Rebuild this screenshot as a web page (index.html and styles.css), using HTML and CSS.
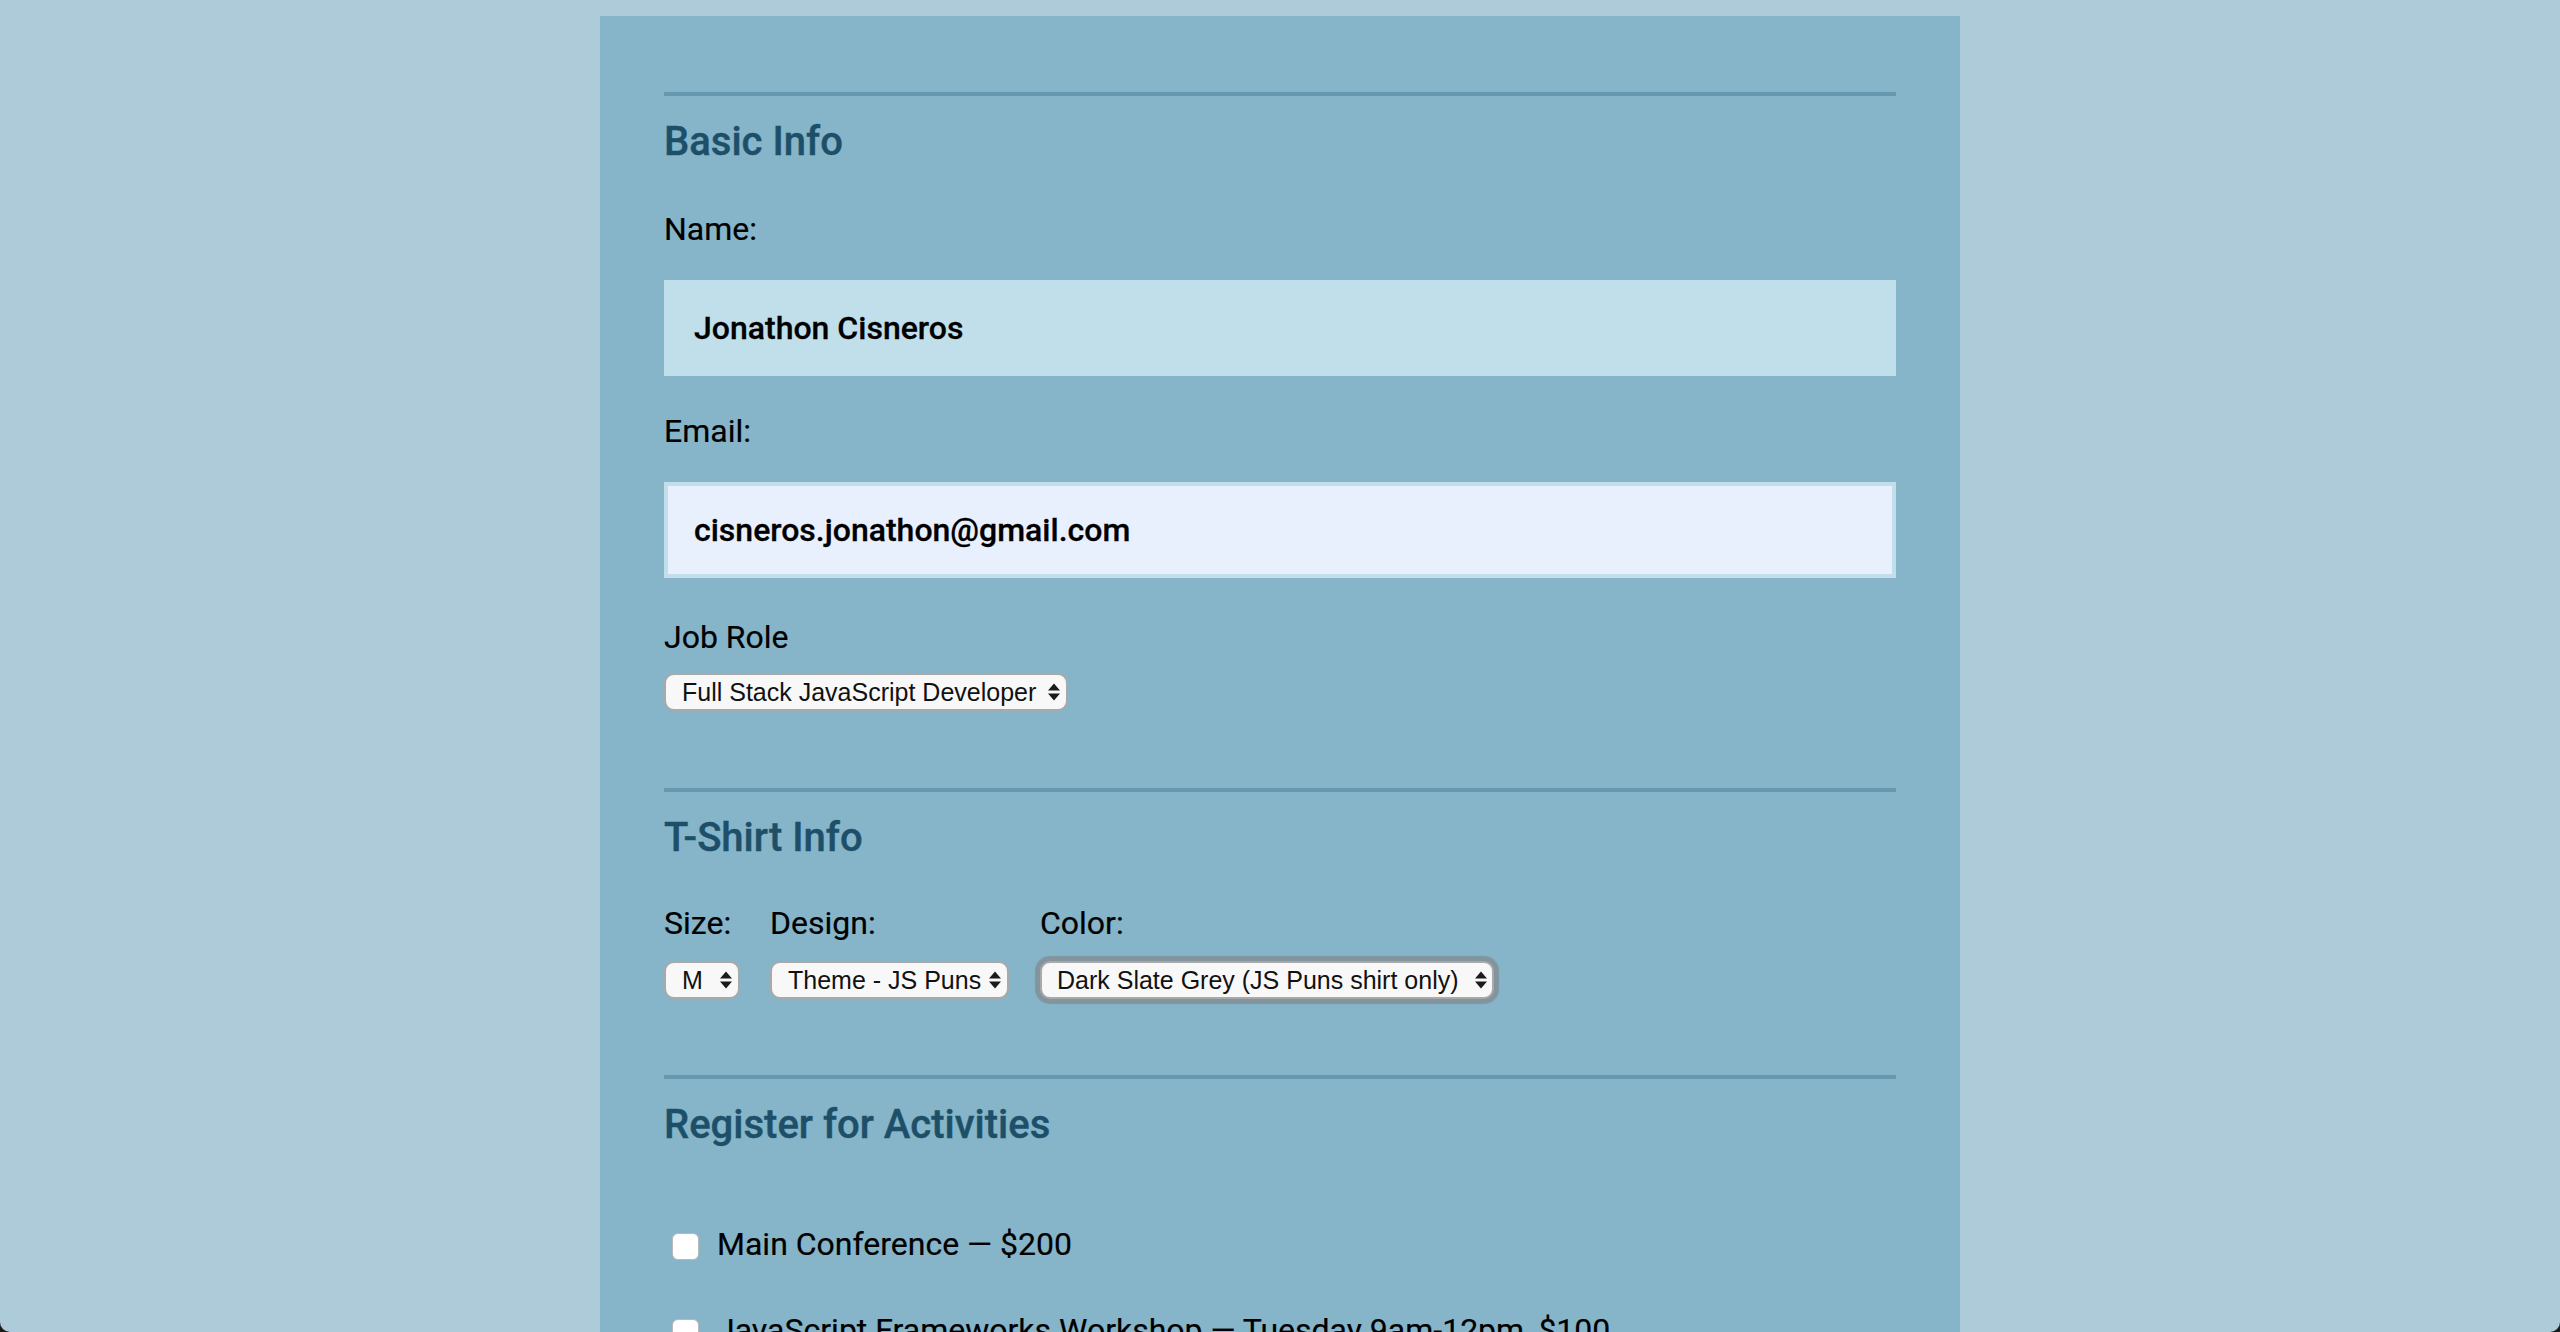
FILE: index.html
```html
<!DOCTYPE html>
<html lang="en">
<head>
<meta charset="utf-8">
<title>Conference Registration</title>
<link rel="stylesheet" href="styles.css">
</head>
<body>
<div class="window">
  <main class="container">
    <form class="form">
      <section class="section">
        <h2 class="section-title">Basic Info</h2>
        <label class="field-label field-label--first" for="name">Name:</label>
        <input class="text-input" id="name" type="text" value="Jonathon Cisneros">
        <label class="field-label" for="mail">Email:</label>
        <input class="text-input text-input--autofill" id="mail" type="email" value="cisneros.jonathon@gmail.com">
        <label class="field-label field-label--role" for="title">Job Role</label>
        <span class="select-wrap">
          <select class="select select--role" id="title">
            <option>Full Stack JavaScript Developer</option>
          </select>
          <svg class="select-arrows" viewBox="0 0 12 18" width="12" height="18" aria-hidden="true"><path d="M0 7.5 L6 0.5 L12 7.5 Z M0 10.5 L12 10.5 L6 17.5 Z"/></svg>
        </span>
      </section>

      <section class="section section--shirt">
        <h2 class="section-title">T-Shirt Info</h2>
        <div class="shirt-row">
          <div class="shirt-col">
            <label class="field-label field-label--inline" for="size">Size:</label>
            <span class="select-wrap select-wrap--tight">
              <select class="select select--size" id="size"><option>M</option></select>
              <svg class="select-arrows" viewBox="0 0 12 18" width="12" height="18" aria-hidden="true"><path d="M0 7.5 L6 0.5 L12 7.5 Z M0 10.5 L12 10.5 L6 17.5 Z"/></svg>
            </span>
          </div>
          <div class="shirt-col">
            <label class="field-label field-label--inline" for="design">Design:</label>
            <span class="select-wrap select-wrap--tight">
              <select class="select select--design" id="design"><option>Theme - JS Puns</option></select>
              <svg class="select-arrows" viewBox="0 0 12 18" width="12" height="18" aria-hidden="true"><path d="M0 7.5 L6 0.5 L12 7.5 Z M0 10.5 L12 10.5 L6 17.5 Z"/></svg>
            </span>
          </div>
          <div class="shirt-col">
            <label class="field-label field-label--inline" for="color">Color:</label>
            <span class="select-wrap select-wrap--tight">
              <select class="select select--color select--focused" id="color"><option>Dark Slate Grey (JS Puns shirt only)</option></select>
              <svg class="select-arrows select-arrows--color" viewBox="0 0 12 18" width="12" height="18" aria-hidden="true"><path d="M0 7.5 L6 0.5 L12 7.5 Z M0 10.5 L12 10.5 L6 17.5 Z"/></svg>
            </span>
          </div>
        </div>
      </section>

      <section class="section">
        <h2 class="section-title">Register for Activities</h2>
        <div class="activities">
          <label class="activity"><input class="checkbox" type="checkbox" name="all"><span>Main Conference — $200</span></label>
          <label class="activity"><input class="checkbox" type="checkbox" name="js-frameworks"><span>JavaScript Frameworks Workshop — Tuesday 9am-12pm, $100</span></label>
          <label class="activity"><input class="checkbox" type="checkbox" name="js-libs"><span>JavaScript Libraries Workshop — Tuesday 1pm-4pm, $100</span></label>
        </div>
      </section>
    </form>
  </main>
</div>
</body>
</html>
```

FILE: styles.css
```css
* {
  box-sizing: border-box;
}

html {
  background: #1d1a17;
}

body {
  margin: 0;
  font-family: Roboto, "Noto Sans", sans-serif;
  color: #000;
}

.window {
  height: 100vh;
  overflow: hidden;
  background: #adcbd8;
  border-radius: 0 0 10px 10px;
}

.container {
  width: 1360px;
  margin: 16px auto 0;
  padding: 76px 64px 400px;
  background: #86b5ca;
}

.form {
  display: flex;
  flex-direction: column;
}

.section {
  display: flex;
  flex-direction: column;
  align-items: flex-start;
  border-top: 4px solid #6699af;
  padding-top: 22px;
  padding-bottom: 77px;
}

.section--shirt {
  padding-bottom: 76px;
}

.section-title {
  margin: 0;
  font-size: 40px;
  line-height: 48px;
  font-weight: 500;
  color: #1d5068;
  -webkit-text-stroke: 0.4px #1d5068;
}

.field-label {
  display: block;
  margin-top: 36px;
  font-size: 32px;
  line-height: 38px;
  -webkit-text-stroke: 0.2px #000;
}

.field-label--first {
  margin-top: 44px;
}

.field-label--role {
  margin-top: 40px;
}

.field-label--inline {
  margin-top: 0;
}

.text-input {
  display: block;
  width: 100%;
  height: 96px;
  margin: 32px 0 0;
  padding: 0 26px;
  border: 4px solid #c1deeb;
  background: #c1deeb;
  font-family: Roboto, "Noto Sans", sans-serif;
  font-size: 32px;
  font-weight: 500;
  color: #000;
  -webkit-text-stroke: 0.3px #000;
  outline: none;
}

.text-input--autofill {
  background: #e8f0fe;
}

.select-wrap {
  position: relative;
  display: inline-flex;
  margin-top: 17px;
}

.select-wrap--tight {
  margin-top: 19px;
}

.select {
  -webkit-appearance: none;
  appearance: none;
  height: 38px;
  margin: 0;
  padding: 0 26px 0 16px;
  border: 2px solid #a9a9a9;
  border-radius: 10px;
  background: #f8f8f8;
  font-family: "Liberation Sans", Arial, sans-serif;
  font-size: 25px;
  line-height: 34px;
  color: #111;
  outline: none;
}

.select--role {
  width: 404px;
}

.select--size {
  width: 76px;
}

.select--design {
  width: 239px;
}

.select--color {
  width: 454px;
  padding-left: 15px;
}

.select--focused {
  box-shadow: 0 0 1px 5px rgba(128, 138, 143, 0.75);
}

.select-arrows {
  position: absolute;
  right: 8px;
  top: 50%;
  transform: translateY(-50%);
  fill: #1b1b1b;
  pointer-events: none;
}

.select-arrows--color {
  right: 7px;
}

.shirt-row {
  display: grid;
  grid-template-columns: 106px 270px auto;
  margin-top: 42px;
}

.shirt-col {
  display: flex;
  flex-direction: column;
  align-items: flex-start;
}

.activities {
  display: flex;
  flex-direction: column;
  margin-top: 76px;
}

.activity {
  display: flex;
  align-items: flex-start;
  font-size: 32px;
  line-height: 38px;
  margin-bottom: 48px;
  -webkit-text-stroke: 0.2px #000;
}

.checkbox {
  -webkit-appearance: none;
  appearance: none;
  flex: none;
  width: 27px;
  height: 27px;
  margin: 8px 18px 0 8px;
  border: 1px solid #b9b9b9;
  border-radius: 6px;
  background: #fff;
}
```
